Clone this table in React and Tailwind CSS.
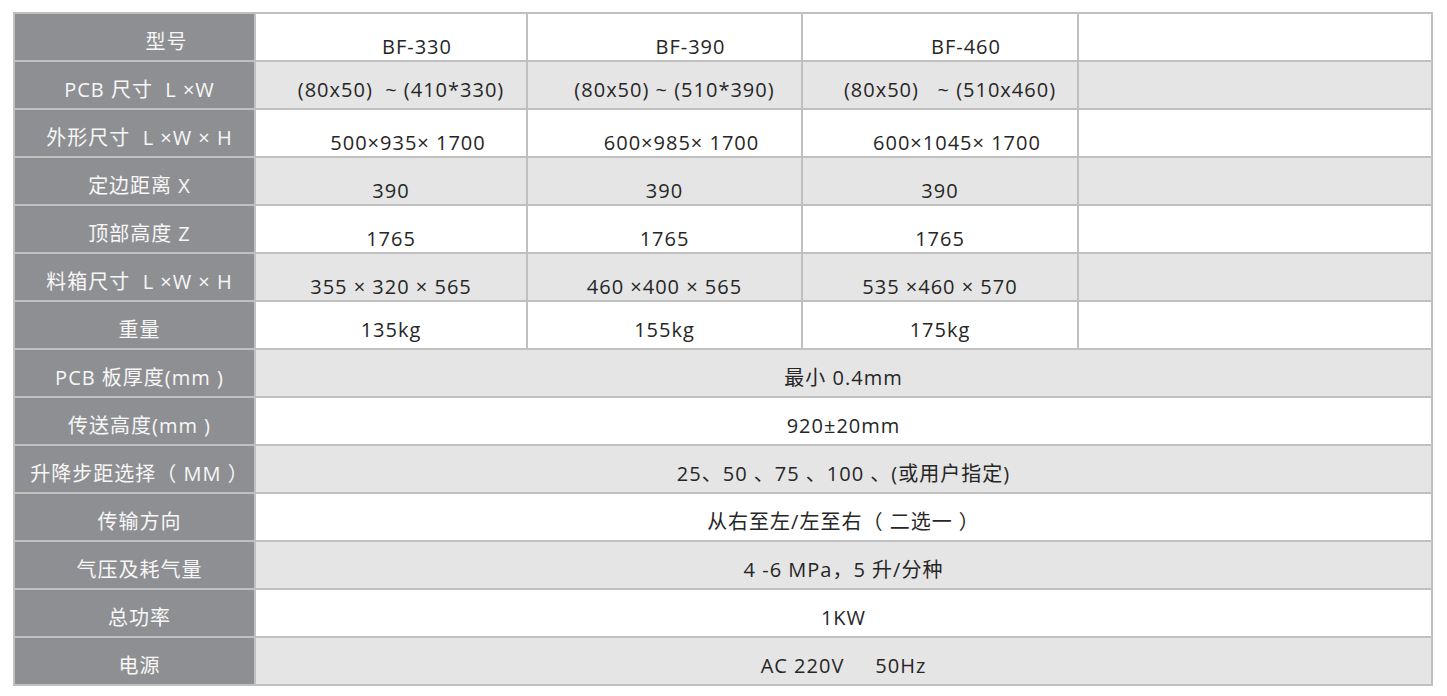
import React from 'react';

const rows = [
  { label: '型号', cells: ['BF-330', 'BF-390', 'BF-460', ''], pad: 'pt-[19px] pl-[52px]', shift: true },
  { label: 'PCB 尺寸  L ×W', cells: ['(80x50)  ~ (410*330)', '(80x50) ~ (510*390)', '(80x50)   ~ (510x460)', ''], pad: 'pt-[10px] pl-[20px]' },
  { label: '外形尺寸  L ×W × H', cells: ['500×935× 1700', '600×985× 1700', '600×1045× 1700', ''], pad: 'pt-[19px] pl-[34px]' },
  { label: '定边距离 X', cells: ['390', '390', '390', ''], pad: 'pt-[19px]' },
  { label: '顶部高度 Z', cells: ['1765', '1765', '1765', ''], pad: 'pt-[19px]' },
  { label: '料箱尺寸  L ×W × H', cells: ['355 × 320 × 565', '460 ×400 × 565', '535 ×460 × 570', ''], pad: 'pt-[19px]' },
  { label: '重量', cells: ['135kg', '155kg', '175kg', ''], pad: 'pt-[10px]' },
  { label: 'PCB 板厚度(mm )', span: '最小 0.4mm' },
  { label: '传送高度(mm )', span: '920±20mm' },
  { label: '升降步距选择（ MM ）', span: '25、50 、75 、100 、(或用户指定)' },
  { label: '传输方向', span: '从右至左/左至右（ 二选一 ）' },
  { label: '气压及耗气量', span: '4 -6 MPa，5 升/分种' },
  { label: '总功率', span: '1KW' },
  { label: '电源', span: 'AC 220V     50Hz' },
];

export default function App() {
  return (
    <div className="w-[1447px] h-[696px] bg-white font-['Open_Sans','Noto_Sans_CJK_SC',sans-serif] text-[20px] tracking-[1px]">
      <div className="ml-[13px] pt-[12px]">
        <div className="grid grid-cols-[239px_270px_273px_274px_352px] auto-rows-[46px] gap-[2px] p-[2px] bg-[#c0c0c0] w-[1420px]">
          {rows.map((r, i) => {
            const bg = i % 2 === 0 ? 'bg-white' : 'bg-[#e5e5e5]';
            return (
              <React.Fragment key={i}>
                <div className={`bg-[#8e8f92] text-[#f7f7f7] flex items-center justify-center pt-[10px] whitespace-pre ${r.shift ? 'pl-[64px]' : 'pl-[10px]'}`}>
                  {r.label}
                </div>
                {r.span ? (
                  <div className={`${bg} col-span-4 flex items-center justify-center pt-[10px] text-[#262626] whitespace-pre`}>
                    {r.span}
                  </div>
                ) : (
                  r.cells.map((c, j) => (
                    <div
                      key={j}
                      className={`${bg} flex items-center justify-center text-[#262626] whitespace-pre ${r.pad}`}
                    >
                      {c}
                    </div>
                  ))
                )}
              </React.Fragment>
            );
          })}
        </div>
      </div>
    </div>
  );
}
